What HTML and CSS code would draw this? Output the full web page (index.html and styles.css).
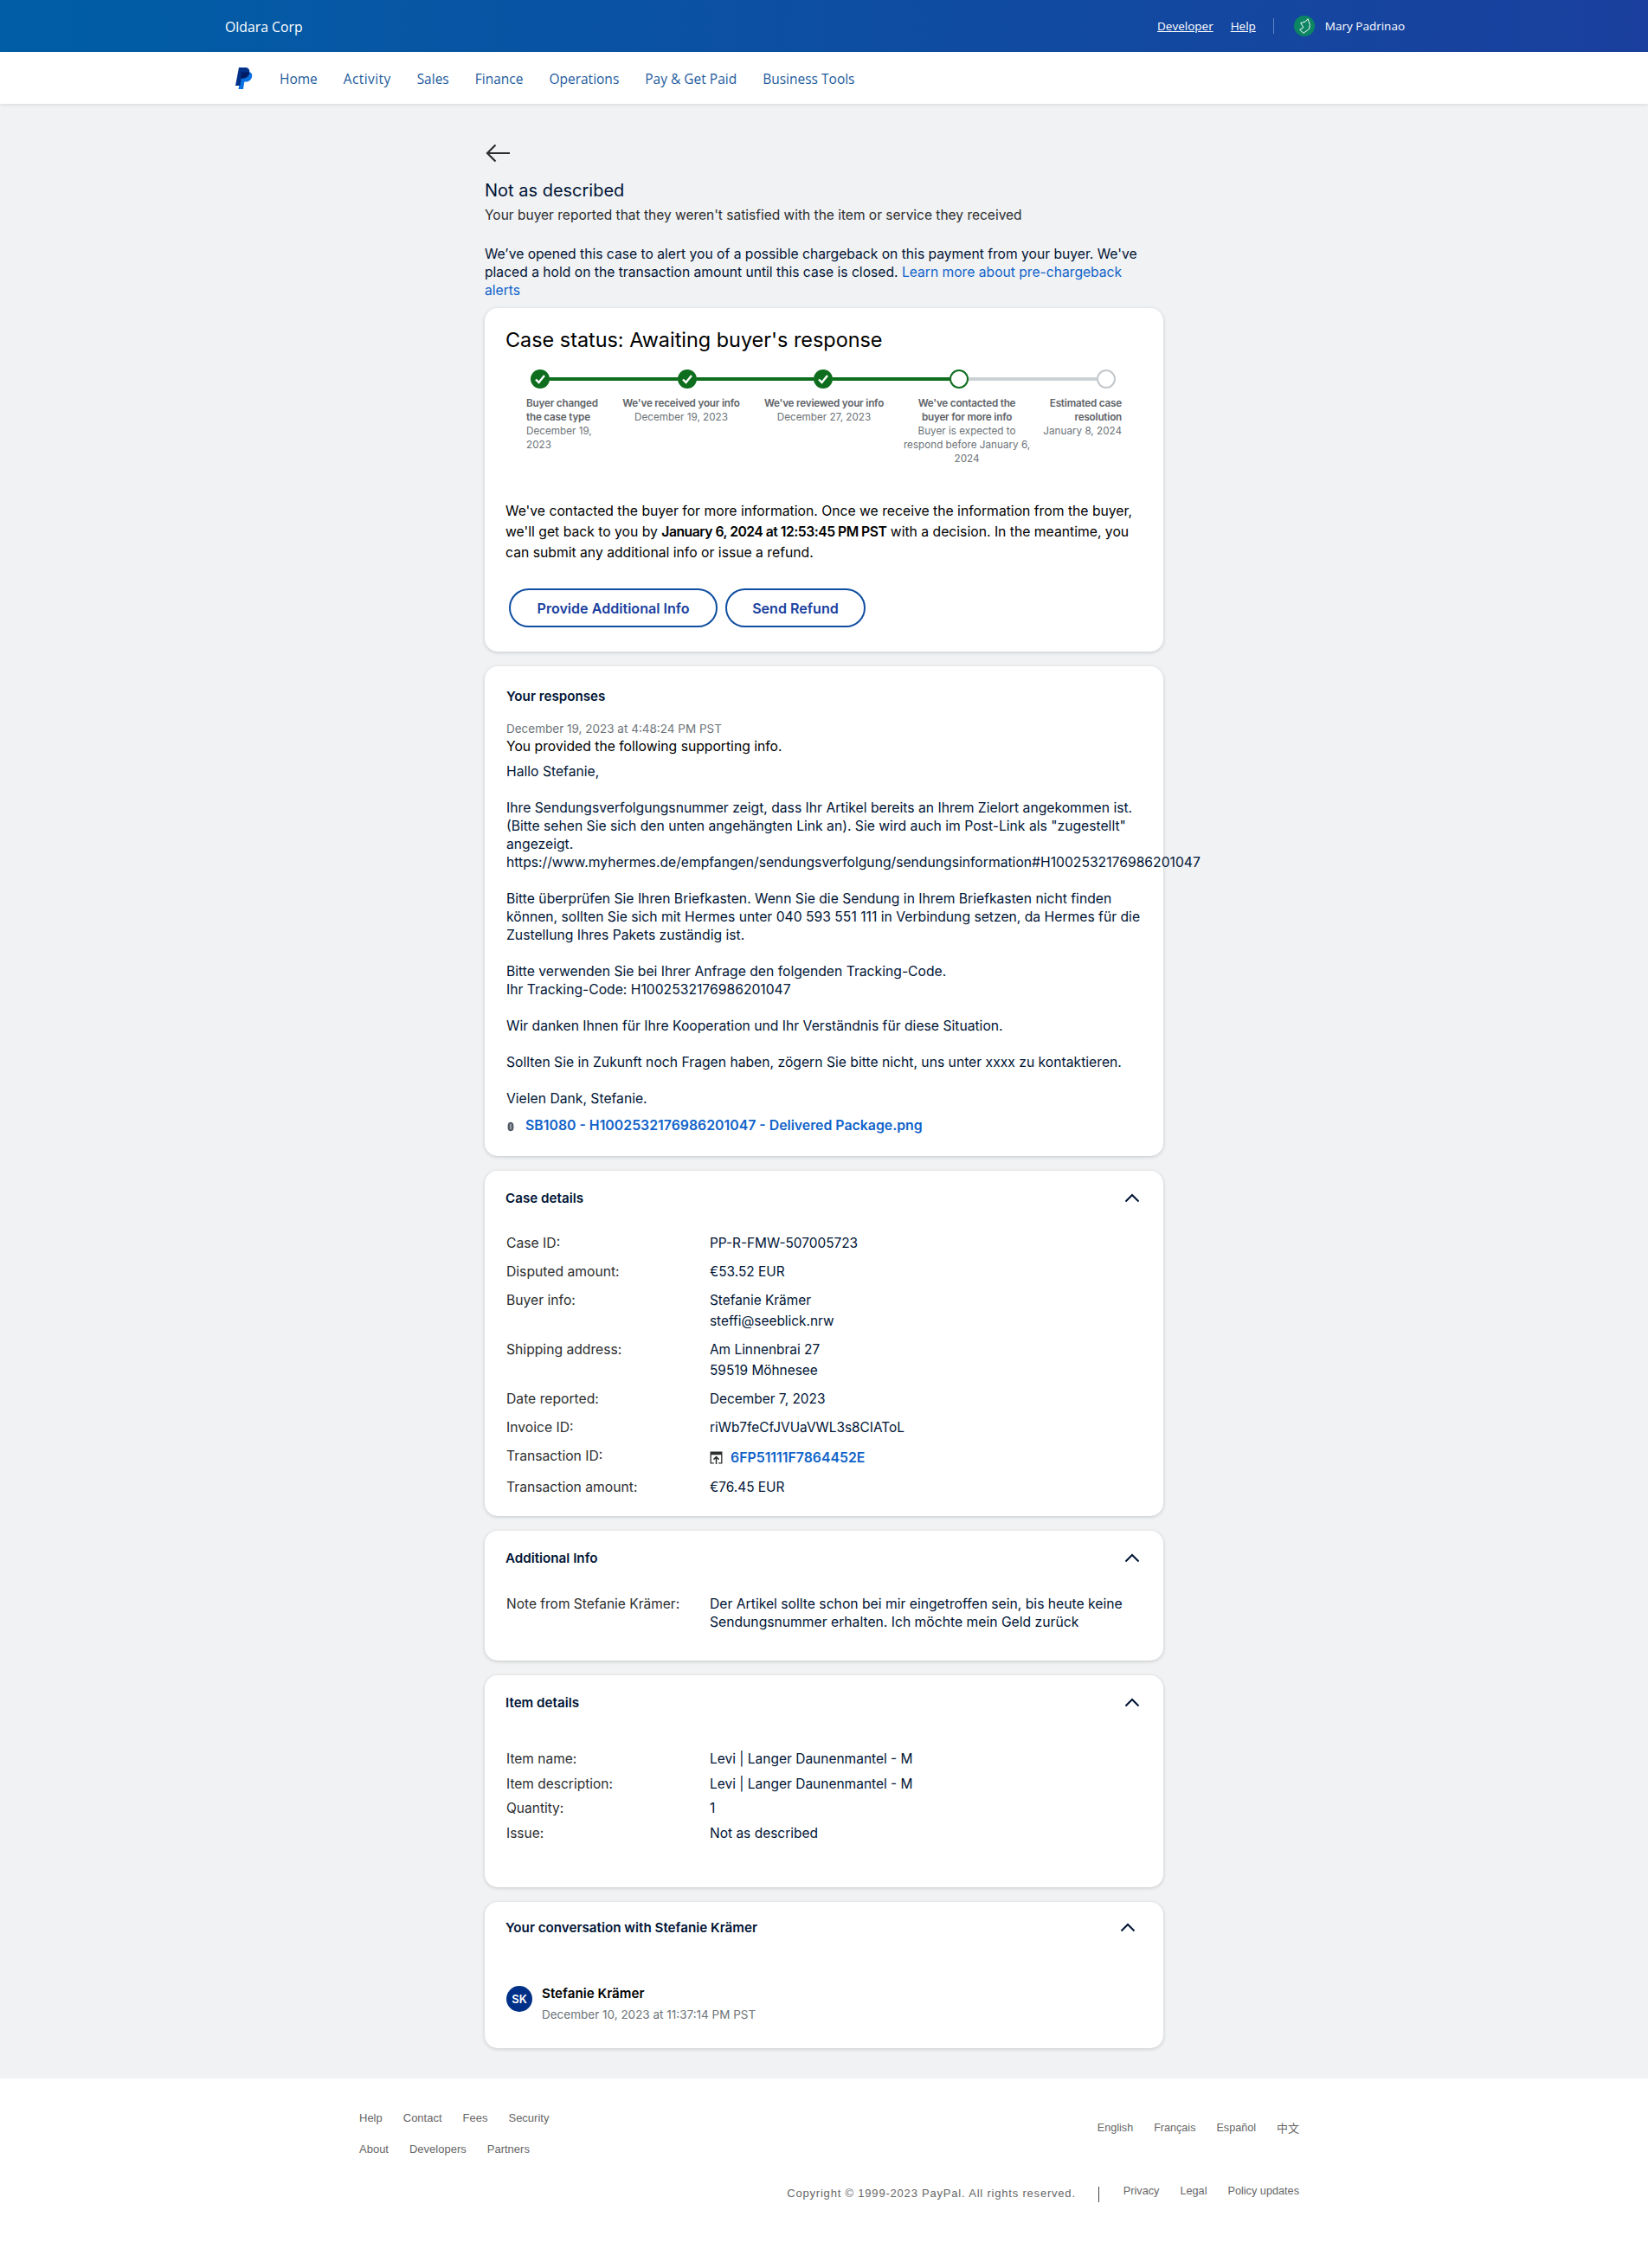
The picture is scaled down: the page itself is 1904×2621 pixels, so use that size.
FILE: index.html
```html
<!DOCTYPE html>
<html lang="en">
<head>
<meta charset="utf-8">
<title>Case details</title>
<link rel="stylesheet" href="styles.css">
</head>
<body>
<header class="topbar">
  <span class="org">Oldara Corp</span>
  <div class="top-right">
    <a class="top-link">Developer</a>
    <a class="top-link">Help</a>
    <span class="top-sep"></span>
    <span class="avatar-shield"><svg width="24" height="24" viewBox="0 0 24 24"><circle cx="12" cy="12" r="12" fill="#0b8562"/><path d="M16 3.700 13.300 7 7.700 8.700 11 13.700 6.700 16.300 11 20.300 17.700 15.300 18.300 10.300z" fill="none" stroke="#fff" stroke-width="1" stroke-linejoin="round"/></svg></span>
    <span class="user">Mary Padrinao</span>
  </div>
</header>
<nav class="subnav">
  <svg class="pp" width="20" height="25" viewBox="0 0 20 25"><path d="M7 5h7c3.500 0 5.800 1.800 5.200 5.200-.7 4-3.700 6.300-7.200 6.300h-1.700L9 25H3.500z" fill="#0a72e0"/><path d="M4 0h6.800c3.700 0 6 2 5.400 5.800-.7 4.200-3.800 6.700-7.700 6.700H6.700L5.400 21H0z" fill="#003087"/><path d="M7 5.500h7c1.200 0 1.900.2 2.300.5-.7 4-3.800 6.500-7.800 6.500H6z" fill="#001c64"/></svg>
  <a class="nav-link">Home</a>
  <a class="nav-link nav-link-spaced">Activity</a>
  <a class="nav-link">Sales</a>
  <a class="nav-link">Finance</a>
  <a class="nav-link">Operations</a>
  <a class="nav-link">Pay &amp; Get Paid</a>
  <a class="nav-link">Business Tools</a>
</nav>
<main class="page">
  <svg class="back" width="28" height="22" viewBox="0 0 28 22"><path d="M28 11H2M11.500 1.500 2 11l9.500 9.500" fill="none" stroke="#2c2e2f" stroke-width="2.200"/></svg>
  <h1 class="title">Not as described</h1>
  <p class="subtitle">Your buyer reported that they weren't satisfied with the item or service they received</p>
  <p class="intro">We’ve opened this case to alert you of a possible chargeback on this payment from your buyer. We've placed a hold on the transaction amount until this case is closed. <a class="link">Learn more about pre-chargeback alerts</a></p>

  <section class="card status">
    <h2 class="status-title">Case status: Awaiting buyer's response</h2>
    <div class="track">
      <span class="dot done"><svg width="14" height="14" viewBox="0 0 14 14"><path d="M2 7.500 5.500 11 12 3" fill="none" stroke="#fff" stroke-width="2.400"/></svg></span>
      <span class="bar bar-a green"></span>
      <span class="dot done"><svg width="14" height="14" viewBox="0 0 14 14"><path d="M2 7.500 5.500 11 12 3" fill="none" stroke="#fff" stroke-width="2.400"/></svg></span>
      <span class="bar bar-b green"></span>
      <span class="dot done"><svg width="14" height="14" viewBox="0 0 14 14"><path d="M2 7.500 5.500 11 12 3" fill="none" stroke="#fff" stroke-width="2.400"/></svg></span>
      <span class="bar bar-b green"></span>
      <span class="dot current"></span>
      <span class="bar bar-c grey"></span>
      <span class="dot future"></span>
    </div>
    <div class="steps">
      <div class="step step-left"><b>Buyer changed<br>the case type</b><br>December 19,<br>2023</div>
      <div class="step"><b>We've received your info</b><br>December 19, 2023</div>
      <div class="step"><b>We've reviewed your info</b><br>December 27, 2023</div>
      <div class="step"><b>We've contacted the<br>buyer for more info</b><br>Buyer is expected to<br>respond before January 6,<br>2024</div>
      <div class="step step-right"><b>Estimated case<br>resolution</b><br>January 8, 2024</div>
    </div>
    <p class="status-text">We've contacted the buyer for more information. Once we receive the information from the buyer, we'll get back to you by <b>January 6, 2024 at 12:53:45 PM PST</b> with a decision. In the meantime, you can submit any additional info or issue a refund.</p>
    <div class="actions">
      <button class="btn btn-wide">Provide Additional Info</button>
      <button class="btn btn-narrow">Send Refund</button>
    </div>
  </section>

  <section class="card responses">
    <h3 class="card-title">Your responses</h3>
    <div class="stamp">December 19, 2023 at 4:48:24 PM PST</div>
    <div class="provided">You provided the following supporting info.</div>
    <div class="message">Hallo Stefanie,<br><br>Ihre Sendungsverfolgungsnummer zeigt, dass Ihr Artikel bereits an Ihrem Zielort angekommen ist.<br>(Bitte sehen Sie sich den unten angehängten Link an). Sie wird auch im Post-Link als "zugestellt"<br>angezeigt.<br>https://www.myhermes.de/empfangen/sendungsverfolgung/sendungsinformation#H1002532176986201047<br><br>Bitte überprüfen Sie Ihren Briefkasten. Wenn Sie die Sendung in Ihrem Briefkasten nicht finden<br>können, sollten Sie sich mit Hermes unter 040 593 551 111 in Verbindung setzen, da Hermes für die<br>Zustellung Ihres Pakets zuständig ist.<br><br>Bitte verwenden Sie bei Ihrer Anfrage den folgenden Tracking-Code.<br>Ihr Tracking-Code: H1002532176986201047<br><br>Wir danken Ihnen für Ihre Kooperation und Ihr Verständnis für diese Situation.<br><br>Sollten Sie in Zukunft noch Fragen haben, zögern Sie bitte nicht, uns unter xxxx zu kontaktieren.<br><br>Vielen Dank, Stefanie.</div>
    <div class="attachment">
      <svg class="clip" width="10" height="12" viewBox="0 0 10 12"><path d="M5 .8C3 .8 1.600 2.200 1.600 4.500v3.300c0 2 1.400 3.400 3.400 3.400s3.400-1.400 3.400-3.400V4.500C8.400 2.500 7 .8 5 .8z" fill="#545d68"/><path d="M5 3v6" stroke="#fff" stroke-width=".8"/></svg>
      <a class="strong-link">SB1080 - H1002532176986201047 - Delivered Package.png</a>
    </div>
  </section>

  <section class="card details">
    <div class="card-head"><h3 class="card-title">Case details</h3><svg class="chev" width="18" height="11" viewBox="0 0 18 11"><path d="M1.500 9.500 9 2l7.500 7.500" fill="none" stroke="#001435" stroke-width="2"/></svg></div>
    <dl class="rows rows-case">
      <dt>Case ID:</dt><dd>PP-R-FMW-507005723</dd>
      <dt>Disputed amount:</dt><dd>€53.52 EUR</dd>
      <dt>Buyer info:</dt><dd>Stefanie Krämer<br>steffi@seeblick.nrw</dd>
      <dt>Shipping address:</dt><dd>Am Linnenbrai 27<br>59519 Möhnesee</dd>
      <dt>Date reported:</dt><dd>December 7, 2023</dd>
      <dt>Invoice ID:</dt><dd>riWb7feCfJVUaVWL3s8CIAToL</dd>
      <dt>Transaction ID:</dt><dd class="tx"><svg width="15" height="15" viewBox="0 0 14 14"><path d="M.5.500h13v13h-4v-1.200h2.800V4H1.700v8.300h2.800v1.200h-4z" fill="#2c2e2f"/><path d="M7 14V6.500M4.200 9 7 6.200 9.800 9" fill="none" stroke="#2c2e2f" stroke-width="1.400"/></svg><a class="strong-link">6FP51111F7864452E</a></dd>
      <dt>Transaction amount:</dt><dd>€76.45 EUR</dd>
    </dl>
  </section>

  <section class="card additional">
    <div class="card-head"><h3 class="card-title">Additional Info</h3><svg class="chev" width="18" height="11" viewBox="0 0 18 11"><path d="M1.500 9.500 9 2l7.500 7.500" fill="none" stroke="#001435" stroke-width="2"/></svg></div>
    <dl class="rows rows-note">
      <dt>Note from Stefanie Krämer:</dt><dd>Der Artikel sollte schon bei mir eingetroffen sein, bis heute keine Sendungsnummer erhalten. Ich möchte mein Geld zurück</dd>
    </dl>
  </section>

  <section class="card items">
    <div class="card-head"><h3 class="card-title">Item details</h3><svg class="chev" width="18" height="11" viewBox="0 0 18 11"><path d="M1.500 9.500 9 2l7.500 7.500" fill="none" stroke="#001435" stroke-width="2"/></svg></div>
    <dl class="rows rows-item">
      <dt>Item name:</dt><dd>Levi | Langer Daunenmantel - M</dd>
      <dt>Item description:</dt><dd>Levi | Langer Daunenmantel - M</dd>
      <dt>Quantity:</dt><dd>1</dd>
      <dt>Issue:</dt><dd>Not as described</dd>
    </dl>
  </section>

  <section class="card conversation">
    <div class="card-head conv-head"><h3 class="card-title">Your conversation with Stefanie Krämer</h3><svg class="chev" width="18" height="11" viewBox="0 0 18 11"><path d="M1.500 9.500 9 2l7.500 7.500" fill="none" stroke="#001435" stroke-width="2"/></svg></div>
    <div class="person">
      <span class="initials">SK</span>
      <div>
        <div class="person-name">Stefanie Krämer</div>
        <div class="stamp person-date">December 10, 2023 at 11:37:14 PM PST</div>
      </div>
    </div>
  </section>
</main>
<footer class="footer">
  <div class="foot-top">
    <div class="foot-left">
      <div class="foot-row"><a>Help</a><a>Contact</a><a>Fees</a><a>Security</a></div>
      <div class="foot-row"><a>About</a><a>Developers</a><a>Partners</a></div>
    </div>
    <div class="foot-lang"><a>English</a><a>Français</a><a>Español</a><a class="cjk">中文</a></div>
  </div>
  <div class="foot-bottom">
    <span class="copy">Copyright © 1999-2023 PayPal. All rights reserved.</span>
    <span class="foot-sep"></span>
    <div class="foot-legal"><a>Privacy</a><a>Legal</a><a>Policy updates</a></div>
  </div>
</footer>
</body>
</html>
```
FILE: styles.css
```css
* { box-sizing: border-box; }
html, body { margin: 0; padding: 0; }
body { background: #f1f2f4; font-family: Inter, "Liberation Sans", sans-serif; color: #001435; font-size: 15px; }
h1, h2, h3, p, dl, dd { margin: 0; }
a { cursor: pointer; }

.topbar { height: 60px; background: linear-gradient(90deg, #005ea6 0%, #1a3f9e 100%); display: flex; justify-content: space-between; align-items: center; padding: 0 281px 0 260px; color: #fff; font-family: "Open Sans", sans-serif; font-size: 15.800px; }
.org { position: relative; top: 1px; }
.top-right { display: flex; align-items: center; padding-bottom: 1px; }
.top-link { color: #fff; text-decoration: underline; margin-right: 20px; font-size: 13.500px; }
.top-sep { width: 1px; height: 18px; background: #5f86c4; margin: 0 15px 0 0; }
.avatar-shield { display: flex; margin: 0 12px 0 8px; }
.user { font-size: 13.500px; }

.subnav { height: 60px; background: #fff; display: flex; align-items: center; padding: 2px 0 0 272px; box-shadow: 0 1px 4px rgba(0,0,0,.1); }
.pp { margin-right: 31px; margin-top: -2px; }
.nav-link { color: #1d5b9c; font-family: "Open Sans", sans-serif; font-size: 15.500px; margin-right: 30px; }
.nav-link-spaced { letter-spacing: .4px; }

.page { width: 784px; margin: 0 auto; padding: 46px 0 35px; }
.back { display: block; margin-left: 1px; }
.title { font-size: 20px; font-weight: 400; line-height: 28px; margin-top: 18px; }
.subtitle { font-size: 15.500px; line-height: 22px; margin-top: 4px; color: #2c2e2f; }
.intro { font-size: 15.650px; line-height: 21px; margin-top: 23px; padding-right: 4px; }
.link { color: #0f62c9; }

.card { background: #fff; border-radius: 15px; box-shadow: 0 1px 4px rgba(0,0,0,.18); margin-bottom: 17px; padding: 0 24px; }
.status { margin-top: 10px; height: 397px; padding-top: 20px; }
.status-title { font-size: 23.400px; font-weight: 400; line-height: 34px; color: #000; }
.track { display: flex; align-items: center; margin: 17px 0 0 29px; }
.dot { width: 22px; height: 22px; border-radius: 50%; flex: none; display: flex; align-items: center; justify-content: center; }
.done { background: #0e6e1e; }
.current { border: 2.500px solid #0e6e1e; background: #fff; }
.future { border: 2.500px solid #c4c7cb; background: #fff; }
.bar { height: 4px; flex: none; }
.green { background: #0e6e1e; }
.grey { background: #cbd2d6; }
.bar-a { width: 148px; }
.bar-b { width: 135px; }
.bar-c { width: 148px; }
.steps { display: grid; grid-template-columns: 100px 158px 172px 158px 100px; margin: 9px 0 0 24px; font-size: 11.700px; line-height: 16px; color: #6c7378; text-align: center; }
.steps b { font-weight: 600; color: #5e6368; letter-spacing: -.2px; }
.step-left { text-align: left; }
.step-right { text-align: right; }
.status-text { font-size: 15.720px; line-height: 24px; color: #000; margin-top: 41px; }
.status-text b { font-weight: 600; letter-spacing: -.5px; }
.actions { display: flex; gap: 9px; margin: 29px 0 0 4px; }
.btn { height: 45px; border: 2px solid #0f4ea0; border-radius: 23px; background: #fff; color: #1a3f9e; font: 600 16.100px Inter, sans-serif; padding: 0; }
.btn-wide { width: 241px; }
.btn-narrow { width: 162px; }

.responses { height: 566px; padding: 24px 25px 0; overflow: visible; }
.card-title { font-size: 15.200px; font-weight: 600; line-height: 22px; color: #001435; }
.stamp { font-size: 13.500px; line-height: 20px; color: #6c7378; }
.responses .stamp { margin-top: 16px; }
.provided { font-size: 15.700px; line-height: 21px; color: #000; }
.message { font-size: 15.700px; line-height: 21px; margin-top: 8px; white-space: nowrap; color: #001435; }
.attachment { display: flex; align-items: center; gap: 12px; margin-top: 11px; }
.clip { margin-top: 3px; }
.strong-link { color: #0f62c9; font-weight: 600; font-size: 15.850px; }

.card-head { display: flex; justify-content: space-between; align-items: center; padding-top: 21px; padding-right: 3px; }
.chev { margin-top: -2px; }
.conv-head { padding-top: 19px; padding-right: 8px; }
.rows { display: grid; grid-template-columns: 236px 1fr; font-size: 15.500px; line-height: 24px; }
.rows dt { color: #2c2e2f; padding-left: 1px; }
.rows dd { color: #001435; }
.rows-case { margin-top: 29px; row-gap: 9px; font-size: 15.400px; }
.rows-case dt { font-size: 15.700px; }
.tx { display: flex; align-items: center; gap: 9px; height: 27px; }
.rows-note { margin-top: 31px; line-height: 21px; }
.rows-note dd { font-size: 15.700px; }
.rows-item { margin-top: 42px; line-height: 24px; row-gap: 4.600px; }
.details { height: 399px; }
.additional { height: 150px; }
.items { height: 245px; }
.conversation { height: 169px; margin-bottom: 0; }
.person { display: flex; margin-top: 54px; gap: 11px; padding-left: 1px; }
.initials { width: 30px; height: 30px; border-radius: 50%; background: #003087; color: #fff; font-size: 13px; font-weight: 600; display: flex; align-items: center; justify-content: center; margin-top: 2px; }
.person-name { font-size: 15.200px; font-weight: 600; line-height: 22px; color: #000; }
.person-date { margin-top: 3px; }

.footer { background: #fff; height: 219px; padding: 36px 403px 0 415px; font-family: "Liberation Sans", sans-serif; font-size: 13px; color: #666; }
.foot-top { display: flex; justify-content: space-between; }
.foot-row { display: flex; gap: 24px; line-height: 20px; margin-bottom: 16px; }
.foot-lang { display: flex; gap: 24px; line-height: 20px; margin-top: 11px; font-size: 12.600px; }
.cjk { font-family: "Noto Sans CJK SC", sans-serif; font-size: 13px; }
.foot-bottom { display: flex; justify-content: flex-end; align-items: flex-start; margin-top: 12px; }
.copy { letter-spacing: .8px; margin-top: 3px; line-height: 20px; }
.foot-sep { width: 1px; height: 18px; background: #444; margin: 5px 28px 0 26px; }
.foot-legal { display: flex; gap: 24px; line-height: 20px; font-size: 12.700px; }
```
